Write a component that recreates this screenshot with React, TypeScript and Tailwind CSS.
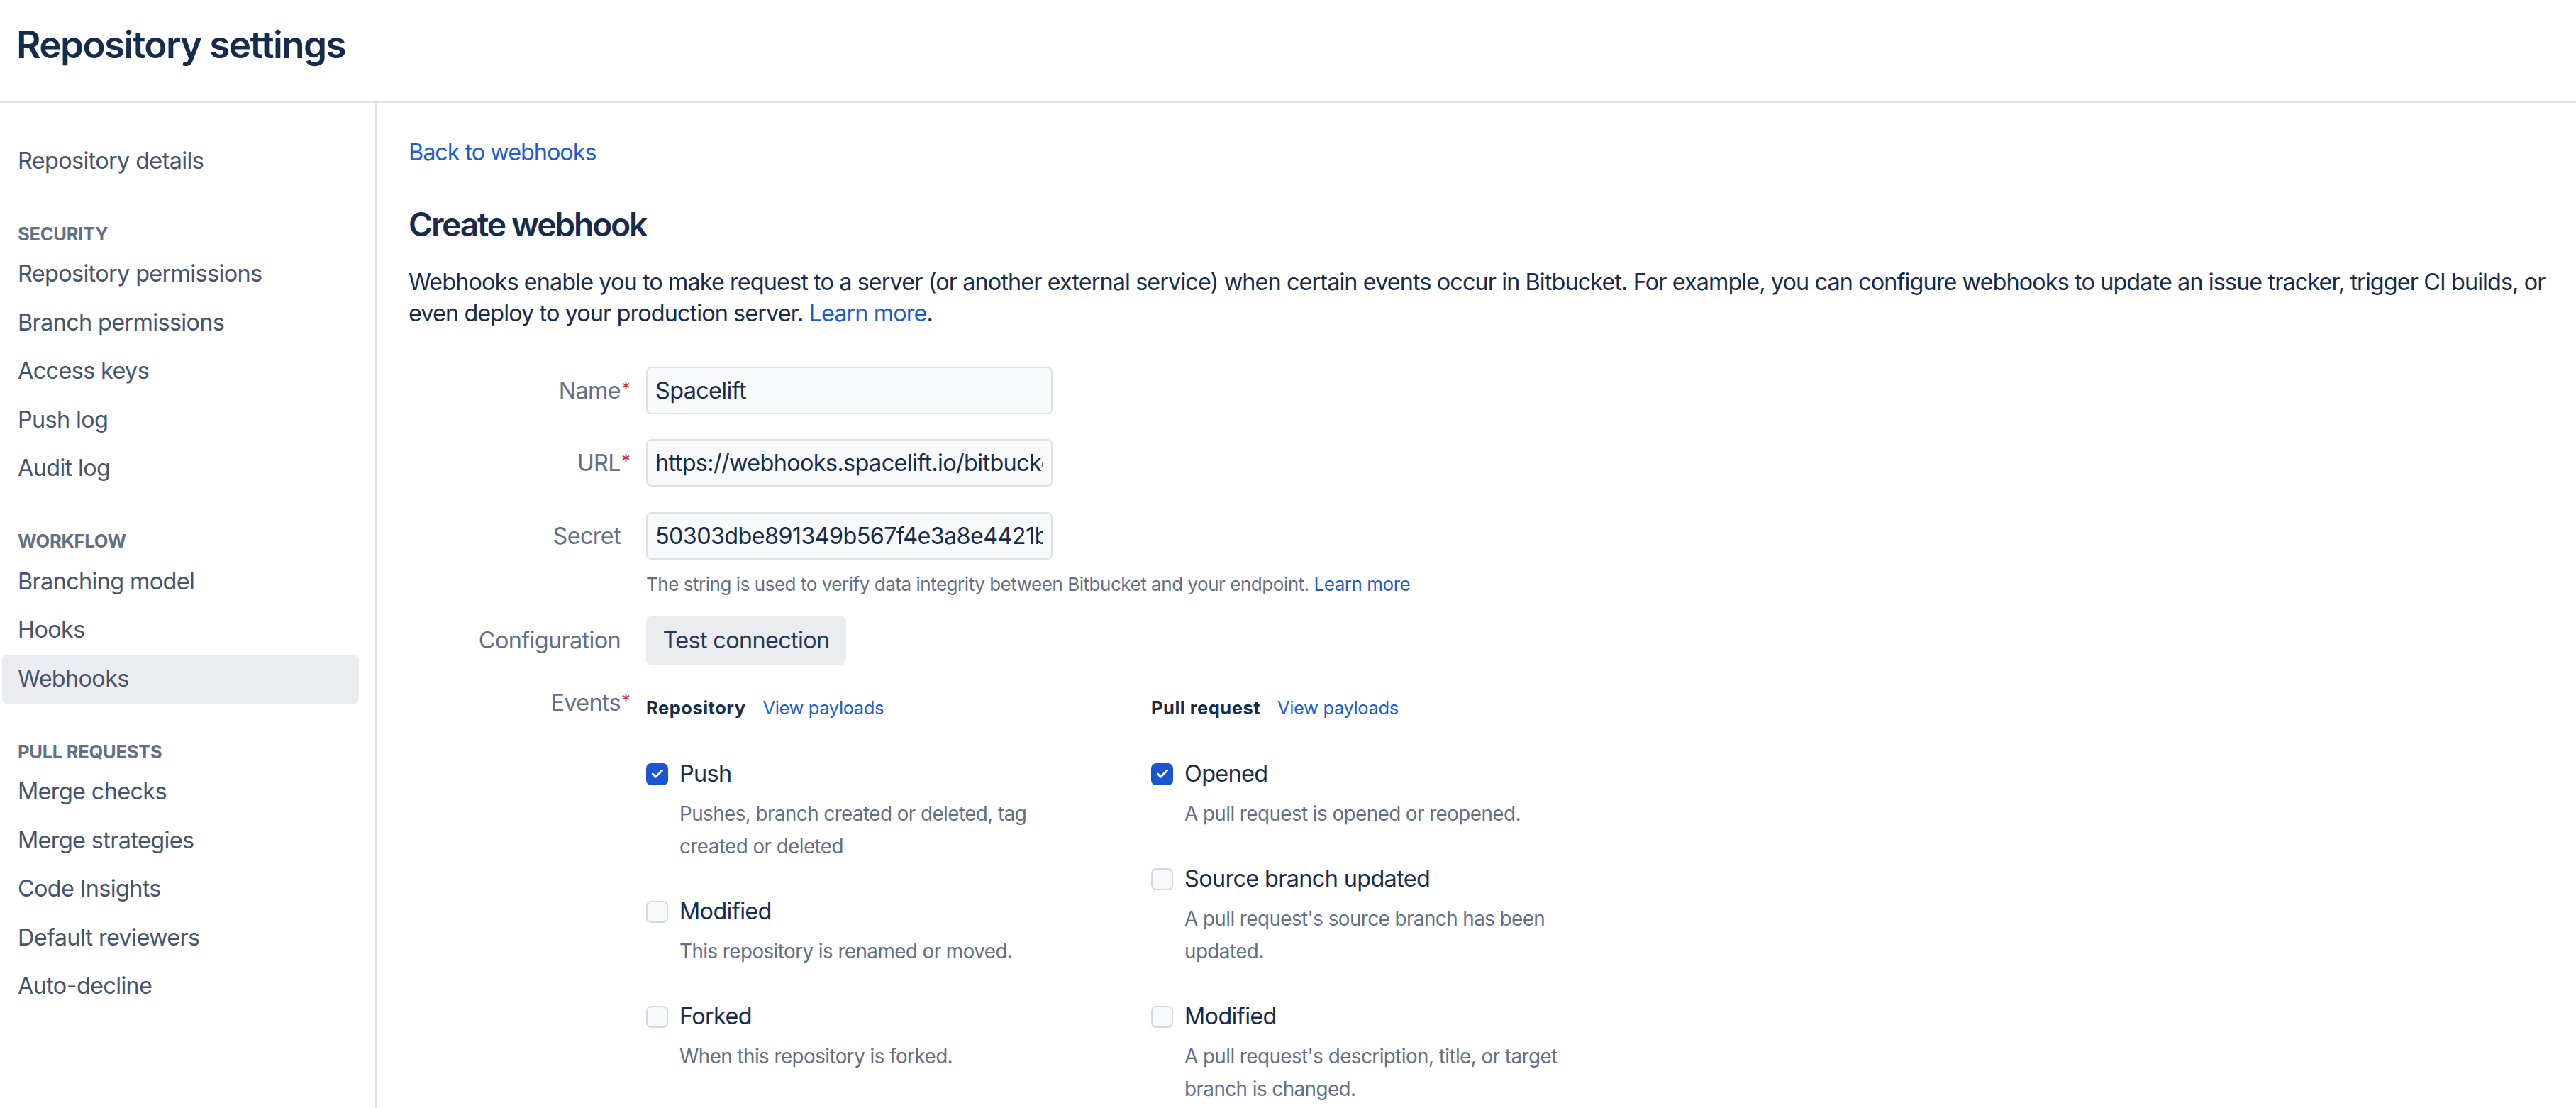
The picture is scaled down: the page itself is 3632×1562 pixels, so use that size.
import { Check } from "lucide-react";

type EventDef = { label: string; desc: string[]; checked?: boolean };

const navGroups: { title?: string; items: string[] }[] = [
  { items: ["Repository details"] },
  {
    title: "SECURITY",
    items: ["Repository permissions", "Branch permissions", "Access keys", "Push log", "Audit log"],
  },
  { title: "WORKFLOW", items: ["Branching model", "Hooks", "Webhooks"] },
  {
    title: "PULL REQUESTS",
    items: ["Merge checks", "Merge strategies", "Code Insights", "Default reviewers", "Auto-decline"],
  },
];

const repoEvents: EventDef[] = [
  { label: "Push", desc: ["Pushes, branch created or deleted, tag", "created or deleted"], checked: true },
  { label: "Modified", desc: ["This repository is renamed or moved."] },
  { label: "Forked", desc: ["When this repository is forked."] },
];

const prEvents: EventDef[] = [
  { label: "Opened", desc: ["A pull request is opened or reopened."], checked: true },
  { label: "Source branch updated", desc: ["A pull request's source branch has been", "updated."] },
  { label: "Modified", desc: ["A pull request's description, title, or target", "branch is changed."] },
];

function Checkbox({ checked }: { checked?: boolean }) {
  if (checked) {
    return (
      <span className="flex h-[31px] w-[31px] shrink-0 items-center justify-center rounded-[7px] bg-[#1a56d1]">
        <Check size={20} strokeWidth={3.5} className="text-white" />
      </span>
    );
  }
  return (
    <span className="h-[31px] w-[31px] shrink-0 rounded-[7px] border-[2.5px] border-[#d5d8de] bg-[#f7f8f9]" />
  );
}

function Label({ text, required }: { text: string; required?: boolean }) {
  return (
    <div className="w-[299px] shrink-0 text-right text-[32.4px] leading-[46px] text-[#626f86]">
      <span className="relative">
        {text}
        {required && (
          <span className="absolute left-full top-[4px] ml-[1px] text-[26px] leading-none text-[#c9372c]">*</span>
        )}
      </span>
    </div>
  );
}

function Field({ value }: { value: string }) {
  return (
    <input
      readOnly
      value={value}
      className="ml-[36px] h-[67px] w-[573px] rounded-[7px] border-2 border-[#dfe1e6] bg-[#f8f9fa] px-[11px] text-[32.4px] text-[#172b4d] outline-none"
    />
  );
}

function EventColumn({ title, events }: { title: string; events: EventDef[] }) {
  return (
    <div className="w-[712px] shrink-0">
      <div className="mt-[7px] flex items-center gap-[24px] text-[25.5px] leading-[46px]">
        <span className="font-bold tracking-[0.02em] text-[#172b4d]">{title}</span>
        <a className="tracking-[-0.015em] text-[#1a5dd6]">View payloads</a>
      </div>
      {events.map((ev, i) => (
        <div key={ev.label} className={i === 0 ? "mt-[47px]" : "mt-[46px]"}>
          <div className="flex h-[46px] items-center gap-[16px]">
            <Checkbox checked={ev.checked} />
            <span className="text-[32.4px] text-[#172b4d]">{ev.label}</span>
          </div>
          <div className="mt-[10px] pl-[47px] text-[27.8px] leading-[46px] tracking-[-0.02em] text-[#626f86]">
            {ev.desc.map((line) => (
              <div key={line} className="whitespace-nowrap">
                {line}
              </div>
            ))}
          </div>
        </div>
      ))}
    </div>
  );
}

export default function App() {
  return (
    <div className="flex min-h-screen flex-col bg-white font-['Inter',sans-serif] tracking-[-0.04em] text-[#172b4d]">
      {/* Page header */}
      <header className="flex h-[145px] items-center border-b-2 border-[#dfe1e6] pb-[17px] pl-[23px]">
        <h1 className="text-[53px] font-semibold leading-none tracking-[-0.031em] text-[#172b4d]">
          Repository settings
        </h1>
      </header>

      <div className="flex flex-1">
        {/* Sidebar */}
        <nav className="w-[531px] shrink-0 border-r-2 border-[#dfe1e6] pl-[3px] pr-[23px] pt-[48px]">
          {navGroups.map((g, gi) => (
            <div key={gi}>
              {g.title && (
                <div className="pb-[11px] pl-[22px] pt-[55px] text-[25.5px] font-bold leading-[25px] tracking-[-0.01em] text-[#626f86]">
                  {g.title}
                </div>
              )}
              {g.items.map((item) => (
                <div
                  key={item}
                  className={
                    item === "Webhooks"
                      ? "flex h-[68.5px] items-center rounded-[7px] bg-[#ebecf0] px-[22px] text-[32.4px] text-[#44546f]"
                      : "flex h-[68.5px] items-center rounded-[7px] px-[22px] text-[32.4px] text-[#44546f]"
                  }
                >
                  {item}
                </div>
              ))}
            </div>
          ))}
        </nav>

        {/* Main content */}
        <main className="min-w-0 flex-1 pl-[45px] pt-[47px]">
          <a className="block text-[32.4px] leading-[46px] tracking-[-0.032em] text-[#1a5dd6]">Back to webhooks</a>

          <h2 className="mt-[50px] text-[46.3px] font-semibold leading-[56px] tracking-[-0.048em] text-[#172b4d]">
            Create webhook
          </h2>

          <p className="mt-[32px] text-[32.4px] leading-[44px] tracking-[-0.028em] text-[#172b4d]">
            <span className="block whitespace-nowrap">
              Webhooks enable you to make request to a server (or another external service) when certain events
              occur in Bitbucket. For example, you can configure webhooks to update an issue tracker, trigger CI
              builds, or
            </span>
            <span className="block whitespace-nowrap">
              even deploy to your production server. <a className="text-[#1a5dd6]">Learn more</a>.
            </span>
          </p>

          {/* Form */}
          <div className="mt-[53px]">
            <div className="flex items-center">
              <Label text="Name" required />
              <Field value="Spacelift" />
            </div>
            <div className="mt-[35px] flex items-center">
              <Label text="URL" required />
              <Field value="https://webhooks.spacelift.io/bitbucket" />
            </div>
            <div className="mt-[36px] flex items-center">
              <Label text="Secret" />
              <Field value="50303dbe891349b567f4e3a8e4421b7c9d" />
            </div>
            <div className="mt-[15px] pl-[335px] text-[26px] leading-[40px] tracking-[-0.018em] text-[#626f86]">
              The string is used to verify data integrity between Bitbucket and your endpoint.{" "}
              <a className="text-[#1a5dd6]">Learn more</a>
            </div>
            <div className="mt-[25px] flex items-center">
              <Label text="Configuration" />
              <button className="ml-[36px] h-[68px] w-[282px] rounded-[7px] bg-[#ebecf0] text-[32.4px] text-[#253858]">
                Test connection
              </button>
            </div>
            <div className="mt-[31px] flex items-start">
              <Label text="Events" required />
              <div className="ml-[36px] flex">
                <EventColumn title="Repository" events={repoEvents} />
                <EventColumn title="Pull request" events={prEvents} />
              </div>
            </div>
          </div>
        </main>
      </div>
    </div>
  );
}
